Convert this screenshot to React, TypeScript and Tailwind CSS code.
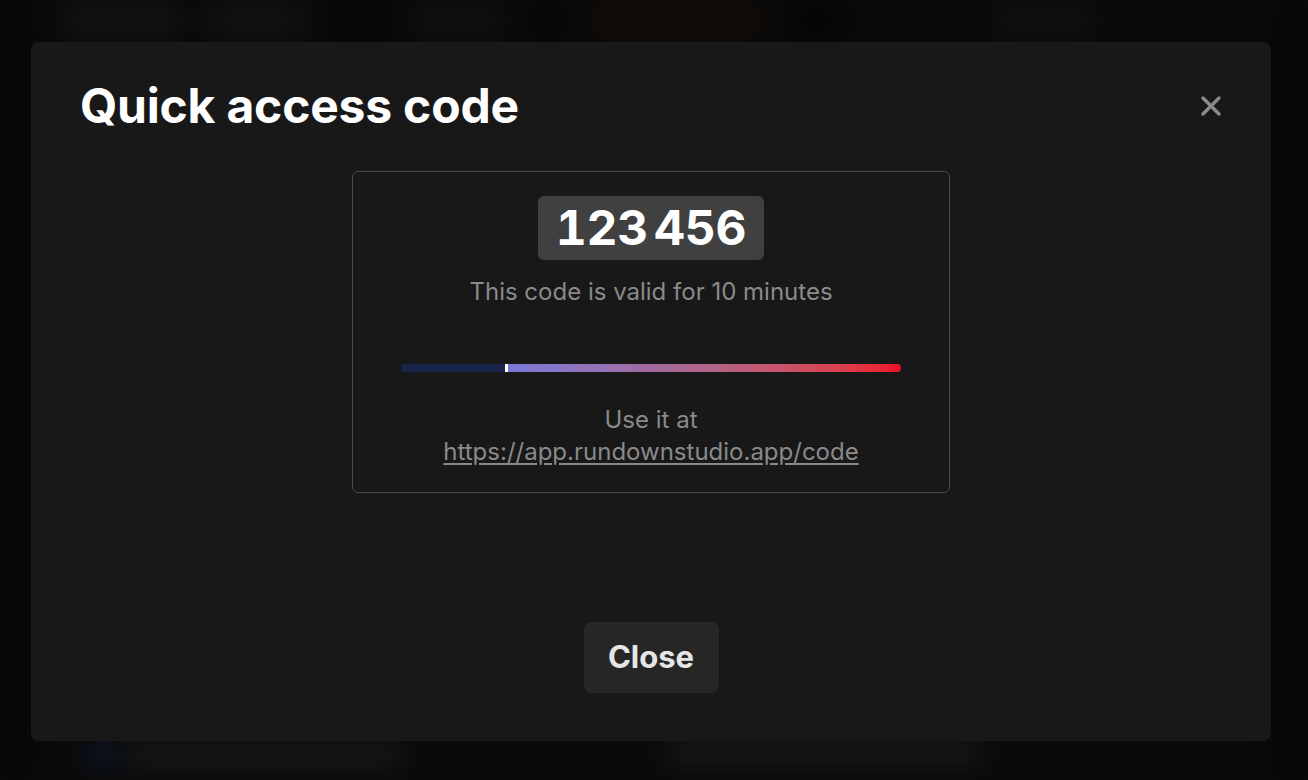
import React from "react";

function XIcon() {
  return (
    <svg width="22" height="22" viewBox="0 0 22 22" fill="none">
      <path d="M3 3L19 19M19 3L3 19" stroke="#8a8a8a" strokeWidth="3.4" strokeLinecap="round" />
    </svg>
  );
}

export default function App() {
  return (
    <div
      className="relative w-[1308px] h-[780px] overflow-hidden bg-[#0a0a0a]"
      style={{ fontFamily: "Inter, 'Noto Sans', sans-serif" }}
    >
      {/* blurred background app */}
      <div className="flex h-full w-full blur-[12px] opacity-80">
        <div className="w-[30px] bg-[#050505]" />
        <div className="flex-1 flex flex-col">
          <div className="h-[40px] flex gap-6 px-8 items-center">
            <div className="w-[120px] h-[30px] rounded-full bg-[#161616]" />
            <div className="w-[100px] h-[30px] rounded-full bg-[#151515]" />
            <div className="w-[60px] h-[30px] rounded bg-[#040404]" />
            <div className="w-[90px] h-[30px] rounded-full bg-[#121212]" />
            <div className="w-[40px] h-[30px] rounded bg-[#050505]" />
            <div className="w-[170px] h-[40px] bg-[#120c05]" />
            <div className="w-[60px] h-[30px] rounded bg-[#030303]" />
            <div className="w-[100px] h-[30px] rounded bg-[#070909]" />
            <div className="w-[100px] h-[30px] rounded-full bg-[#121212]" />
          </div>
          <div className="flex-1" />
          <div className="h-[40px] flex items-start gap-[260px] px-14">
            <div className="flex items-center gap-2">
              <div className="w-[30px] h-[30px] rounded-full bg-[#0e1a33]" />
              <div className="w-[280px] h-[24px] rounded-full bg-[#1d1d1d]" />
            </div>
            <div className="w-[320px] h-[24px] rounded-full bg-[#1d1d1d]" />
          </div>
        </div>
        <div className="w-[30px] bg-[#050505]" />
      </div>

      {/* modal overlay */}
      <div className="absolute inset-0 flex items-start justify-start pt-[42px] pl-[31px]">
        <div className="w-[1240px] h-[699px] bg-[#181818] rounded-[8px] flex flex-col px-[49px] pt-[86px] pb-[48px]">
          <div className="flex items-center justify-between h-[56px] -mt-[50px]">
            <h1 className="text-[48px] leading-none font-bold text-white tracking-[-0.2px]">Quick access code</h1>
            <button className="mr-[-4px] flex items-center justify-center w-[30px] h-[30px]">
              <XIcon />
            </button>
          </div>

          <div className="flex justify-center mt-[37px]">
            <div className="w-[598px] h-[322px] border border-[#4b4b4b] rounded-[6px] flex flex-col items-center pt-[24px]">
              <div className="h-[64px] px-[18px] bg-[#404040] rounded-[6px] flex items-center">
                <span className="text-[48px] leading-none font-bold text-white tabular-nums tracking-[-0.3px]">
                  123<span className="inline-block w-[6px]" />456
                </span>
              </div>
              <p className="mt-[17px] text-[24px] leading-[30px] text-[#8a8a8a]">This code is valid for 10 minutes</p>
              <div className="mt-[57px] w-[500px] h-[8px] rounded-full flex overflow-hidden">
                <div className="w-[104px] h-full bg-[#18244a]" />
                <div className="w-[3px] h-full bg-white" />
                <div className="flex-1 h-full bg-gradient-to-r from-[#7777d8] via-[#b0648a] to-[#ec0e28]" />
              </div>
              <p className="mt-[32px] text-[24px] leading-[32px] text-[#8a8a8a]">Use it at</p>
              <a className="text-[24px] leading-[32px] text-[#8a8a8a] underline underline-offset-[3px]">
                https://app.rundownstudio.app/code
              </a>
            </div>
          </div>

          <div className="flex-1" />
          <div className="flex justify-center">
            <button className="w-[135px] h-[71px] rounded-[8px] bg-[#262626] text-[31px] font-bold text-[#e6e6e6]">
              Close
            </button>
          </div>
        </div>
      </div>
    </div>
  );
}
